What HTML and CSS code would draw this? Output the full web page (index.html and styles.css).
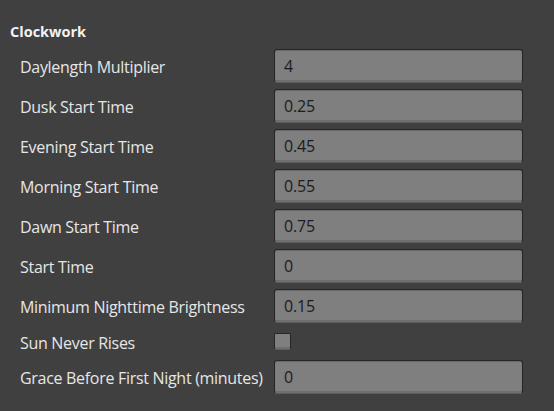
FILE: index.html
```html
<!DOCTYPE html>
<html>
    <head>
        <link rel="stylesheet" href="styles.css">
    </head>
    <body>
        <div class="panel">
            <h2 class="panel-title">Clockwork</h2>
            <div class="settings">
                <label class="setting-label">Daylength Multiplier</label>
                <div class="field">4</div>

                <label class="setting-label">Dusk Start Time</label>
                <div class="field">0.25</div>

                <label class="setting-label">Evening Start Time</label>
                <div class="field">0.45</div>

                <label class="setting-label">Morning Start Time</label>
                <div class="field">0.55</div>

                <label class="setting-label">Dawn Start Time</label>
                <div class="field">0.75</div>

                <label class="setting-label">Start Time</label>
                <div class="field">0</div>

                <label class="setting-label">Minimum Nighttime Brightness</label>
                <div class="field">0.15</div>

                <label class="setting-label short">Sun Never Rises</label>
                <div class="check-cell"><span class="checkbox"></span></div>

                <label class="setting-label">Grace Before First Night (minutes)</label>
                <div class="field">0</div>
            </div>
        </div>
    </body>
</html>
```

FILE: styles.css
```css
body {
    margin: 0;
    padding: 0;
    background-color: #404040;
    color: #e6e6e6;
    font-family: "Open Sans", sans-serif;
}
.panel {
    padding: 20px 31px 0 10px;
}
.panel-title {
    margin: 0;
    height: 23px;
    font-size: 14.5px;
    font-weight: bold;
    line-height: 23px;
    color: #f2f2f2;
}
.settings {
    display: grid;
    grid-template-columns: 254px 249px;
    row-gap: 6px;
    margin-top: 6px;
    padding-left: 10px;
}
.setting-label {
    display: flex;
    align-items: center;
    box-sizing: border-box;
    height: 34px;
    padding-top: 2px;
    font-size: 16px;
    letter-spacing: -0.3px;
    white-space: nowrap;
}
.setting-label.short {
    height: 25px;
}
.field {
    box-sizing: border-box;
    height: 34px;
    padding: 1px 9px 0;
    line-height: 31px;
    font-size: 16px;
    letter-spacing: -0.2px;
    color: #1c1c1c;
    background-color: #7f7f7f;
    border: 1px solid #262626;
    border-bottom-color: #5e5e5e;
    border-radius: 3px;
    box-shadow: inset 0 -2px 0 #6e6e6e, inset 0 1px 1px #6a6a6a;
}
.check-cell {
    display: flex;
    align-items: center;
}
.checkbox {
    box-sizing: border-box;
    width: 17px;
    height: 17px;
    background-color: #7f7f7f;
    border: 1px solid #262626;
    border-bottom-color: #5e5e5e;
    border-radius: 2px;
    box-shadow: inset 0 -2px 0 #6e6e6e;
}
```
